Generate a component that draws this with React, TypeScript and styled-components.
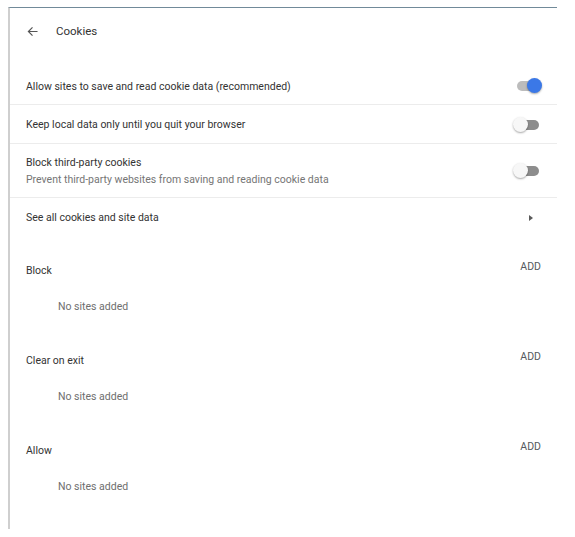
import React from 'react';
import styled, {createGlobalStyle} from "styled-components";

const GlobalStyle = createGlobalStyle`
    body {
        margin: 0;
        background: #ffffff;
        font-family: Roboto, "Liberation Sans", Arial, sans-serif;
    }
`

const Page = styled.div`
    padding: 7px 0 0 8px;
`

const Card = styled.div`
    width: 549px;
    height: 522px;
    border-top: 1px solid #718a99;
    border-left: 2px solid #cfcfcf;
    box-sizing: border-box;
`

const Header = styled.div`
    display: flex;
    align-items: center;
    height: 46px;
    padding-left: 17px;
    margin-bottom: 11px;
    color: #333333;
    font-size: 11.5px;
`

const BackIcon = styled.svg`
    width: 11px;
    height: 11px;
    margin-right: 18px;
`

const Row = styled.div<{ $tall?: boolean }>`
    display: flex;
    align-items: center;
    justify-content: space-between;
    height: ${p => p.$tall ? 54 : 39}px;
    padding: ${p => p.$tall === undefined ? "3px" : "1px"} 17px 0 16px;
    border-top: ${p => p.$tall !== undefined ? "1px solid #ececec" : "none"};
    box-sizing: border-box;
`

const Texts = styled.div`
    display: flex;
    flex-direction: column;
    gap: 4px;
`

const Primary = styled.div`
    font-size: 10.5px;
    color: #333333;
`

const Secondary = styled.div`
    font-size: 10.5px;
    color: #757575;
`

const Track = styled.div<{ $on?: boolean }>`
    position: relative;
    width: 22px;
    height: 10px;
    border-radius: 5px;
    margin-right: 1px;
    background: ${p => p.$on ? "#bcbcbc" : "#8d8d8d"};
`

const Knob = styled.div<{ $on?: boolean }>`
    position: absolute;
    top: -3px;
    left: ${p => p.$on ? "10px" : "-4px"};
    width: 15px;
    height: 15px;
    border-radius: 50%;
    background: ${p => p.$on ? "#3b78e7" : "#f7f7f7"};
    box-shadow: 0 1px 2px rgba(0, 0, 0, 0.35);
`

const Arrow = styled.div`
    width: 0;
    height: 0;
    margin-right: 7px;
    border-top: 3px solid transparent;
    border-bottom: 3px solid transparent;
    border-left: 4px solid #5a5a5a;
`

const Section = styled.div`
    height: 90px;
    padding: 0 16px 0 16px;
`

const SectionHead = styled.div`
    display: flex;
    justify-content: space-between;
    align-items: flex-start;
    padding-top: 24px;
`

const SectionTitle = styled.div`
    font-size: 10.5px;
    color: #333333;
    margin-top: 4px;
`

const AddButton = styled.div`
    font-size: 10.5px;
    color: #555a5e;
`

const Empty = styled.div`
    font-size: 10.5px;
    color: #6e6e6e;
    padding: 23px 0 0 32px;
`

const Toggle = ({on}: { on?: boolean }) => (
    <Track $on={on}>
        <Knob $on={on}/>
    </Track>
)

const sections = ["Block", "Clear on exit", "Allow"]

function App() {
    return (
        <Page>
            <GlobalStyle/>
            <Card>
                <Header>
                    <BackIcon viewBox="0 0 12 12">
                        <path d="M11.5 6H1.5M6 1.5L1.5 6L6 10.5" fill="none" stroke="#555" strokeWidth="1.3"/>
                    </BackIcon>
                    Cookies
                </Header>
                <Row>
                    <Primary>Allow sites to save and read cookie data (recommended)</Primary>
                    <Toggle on/>
                </Row>
                <Row $tall={false}>
                    <Primary>Keep local data only until you quit your browser</Primary>
                    <Toggle/>
                </Row>
                <Row $tall>
                    <Texts>
                        <Primary>Block third-party cookies</Primary>
                        <Secondary>Prevent third-party websites from saving and reading cookie data</Secondary>
                    </Texts>
                    <Toggle/>
                </Row>
                <Row $tall={false}>
                    <Primary>See all cookies and site data</Primary>
                    <Arrow/>
                </Row>
                {sections.map(title => (
                    <Section key={title}>
                        <SectionHead>
                            <SectionTitle>{title}</SectionTitle>
                            <AddButton>ADD</AddButton>
                        </SectionHead>
                        <Empty>No sites added</Empty>
                    </Section>
                ))}
            </Card>
        </Page>
    );
}

export default App;
